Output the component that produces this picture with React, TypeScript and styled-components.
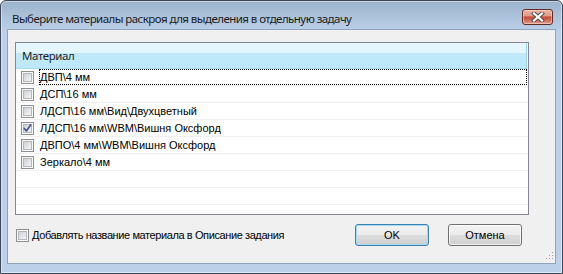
import React from "react";
import styled, { createGlobalStyle } from "styled-components";

const Global = createGlobalStyle`
  html, body { margin: 0; padding: 0; background: #ffffff; }
  * { box-sizing: border-box; }
`;

const Window = styled.div`
  position: relative;
  width: 563px;
  height: 274px;
  border: 1px solid #3b4757;
  border-radius: 6px 6px 0 0;
  background: linear-gradient(180deg, #9cb3cd 0px, #afc5dd 18px, #bcd1e9 30px, #bcd1e9 100%);
  box-shadow: inset 0 0 0 1px rgba(255, 255, 255, 0.45);
  display: flex;
  flex-direction: column;
  overflow: hidden;
`;

const TitleBar = styled.div`
  height: 28px;
  flex: none;
  display: flex;
  align-items: center;
  justify-content: space-between;
  padding: 6px 9px 0 11px;
`;

const Title = styled.span`
  font-family: "Noto Sans", "Open Sans", sans-serif;
  font-size: 11.5px;
  letter-spacing: -0.55px;
  color: #1b1b1b;
  white-space: nowrap;
`;

const CloseButton = styled.div`
  width: 31px;
  height: 16px;
  margin-top: -2px;
  border: 1px solid #5e2b25;
  border-radius: 3px;
  background: linear-gradient(
    180deg,
    #eab2a3 0%,
    #e29c8a 40%,
    #c75039 50%,
    #c95c45 65%,
    #e3a28f 100%
  );
  box-shadow: inset 0 0 0 1px rgba(255, 230, 220, 0.45);
  display: flex;
  align-items: center;
  justify-content: center;
`;

const Client = styled.div`
  position: relative;
  flex: 1;
  margin: 0 6px 9px 6px;
  border: 1px solid #8ea3bc;
  background: #f0f0f0;
  padding: 12px 0 0 7px;
  display: flex;
  flex-direction: column;
`;

const ListBox = styled.div`
  width: 514px;
  height: 173px;
  border: 1px solid #828790;
  background: #ffffff;
  overflow: hidden;
`;

const Header = styled.div`
  width: 511px;
  height: 26px;
  padding: 4px 0 0 6px;
  border-right: 1px solid #9ad6f3;
  border-bottom: 1px solid #a6dbf3;
  background: linear-gradient(180deg, #e5f7fd 0%, #e2f6fd 40%, #c0eafb 42%, #bde8fb 100%);
  font-family: "Noto Sans", "Open Sans", sans-serif;
  font-size: 11.5px;
  letter-spacing: -0.4px;
  color: #1e1e1e;
  line-height: 18px;
`;

const Row = styled.div`
  height: 17px;
  border-bottom: 1px solid #f0f0f0;
  display: flex;
  align-items: center;
  padding-left: 5px;
  gap: 5px;
`;

const ItemLabel = styled.div<{ $focused?: boolean }>`
  flex: 1;
  height: 16px;
  margin-right: 1px;
  padding-left: 1px;
  outline: ${(p) => (p.$focused ? "1px dotted #000" : "none")};
  outline-offset: -1px;
  font-family: "Liberation Sans", Arial, sans-serif;
  font-size: 11px;
  line-height: 16px;
  color: #000;
  white-space: nowrap;
`;

const BottomRow = styled.div`
  margin-top: 9px;
  height: 22px;
  display: flex;
  align-items: center;
  padding-left: 1px;
  padding-right: 33px;
`;

const OptionLabel = styled.label`
  flex: 1;
  display: flex;
  align-items: center;
  gap: 3px;
  font-family: "Liberation Sans", Arial, sans-serif;
  font-size: 11px;
  letter-spacing: -0.4px;
  color: #000;
`;

const Button = styled.div<{ $default?: boolean }>`
  width: 74px;
  height: 22px;
  margin-left: ${(p) => (p.$default ? "0" : "19px")};
  border: 1px solid ${(p) => (p.$default ? "#3c7fb1" : "#707070")};
  border-radius: 3px;
  background: linear-gradient(180deg, #f2f2f2 0%, #ebebeb 50%, #dddddd 51%, #cfcfcf 100%);
  box-shadow: inset 0 0 0 1px ${(p) => (p.$default ? "#9fdcf6" : "rgba(255,255,255,0.7)")};
  display: flex;
  align-items: center;
  justify-content: center;
  font-family: "Liberation Sans", Arial, sans-serif;
  font-size: 11px;
  color: #000;
`;

const Grip = styled.svg`
  position: absolute;
  right: 1px;
  bottom: 1px;
`;

const CheckBox: React.FC<{ checked?: boolean }> = ({ checked }) => (
  <svg width="13" height="13" viewBox="0 0 13 13" style={{ flex: "none" }}>
    <defs>
      <linearGradient id="cbOuter" x1="0" y1="0" x2="1" y2="1">
        <stop offset="0" stopColor="#f4f4f4" />
        <stop offset="1" stopColor="#ffffff" />
      </linearGradient>
      <linearGradient id="cbInner" x1="0" y1="0" x2="1" y2="1">
        <stop offset="0" stopColor="#cbcfd5" />
        <stop offset="1" stopColor="#f7f7f7" />
      </linearGradient>
    </defs>
    <rect x="0.5" y="0.5" width="12" height="12" fill="url(#cbOuter)" stroke="#8e8f8f" />
    <rect x="2.5" y="2.5" width="8" height="8" fill="url(#cbInner)" stroke="#b4b8bd" />
    {checked && (
      <path
        d="M3.3 6.4 L5.4 9 L9.8 2.8"
        fill="none"
        stroke="#3d5196"
        strokeWidth="1.6"
        strokeLinecap="round"
        strokeLinejoin="round"
      />
    )}
  </svg>
);

const CloseIcon = () => (
  <svg width="14" height="10" viewBox="0 0 14 10">
    <path d="M3 1.5 L11 8.5 M11 1.5 L3 8.5" stroke="#4a4a4a" strokeWidth="4" strokeLinecap="square" />
    <path d="M3 1.5 L11 8.5 M11 1.5 L3 8.5" stroke="#ffffff" strokeWidth="2.2" strokeLinecap="square" />
  </svg>
);

const items = [
  { name: "ДВП\\4 мм", checked: false },
  { name: "ДСП\\16 мм", checked: false },
  { name: "ЛДСП\\16 мм\\Вид\\Двухцветный", checked: false },
  { name: "ЛДСП\\16 мм\\WBM\\Вишня Оксфорд", checked: true },
  { name: "ДВПО\\4 мм\\WBM\\Вишня Оксфорд", checked: false },
  { name: "Зеркало\\4 мм", checked: false },
];

const EmptyRow = styled(Row)``;

export default function App() {
  return (
    <>
      <Global />
      <Window>
        <TitleBar>
          <Title>Выберите материалы раскроя для выделения в отдельную задачу</Title>
          <CloseButton>
            <CloseIcon />
          </CloseButton>
        </TitleBar>
        <Client>
          <ListBox>
            <Header>Материал</Header>
            {items.map((it, i) => (
              <Row key={i}>
                <CheckBox checked={it.checked} />
                <ItemLabel $focused={i === 0}>{it.name}</ItemLabel>
              </Row>
            ))}
            {[0, 1, 2].map((i) => (
              <EmptyRow key={"e" + i} />
            ))}
          </ListBox>
          <BottomRow>
            <OptionLabel>
              <CheckBox />
              Добавлять название материала в Описание задания
            </OptionLabel>
            <Button $default>OK</Button>
            <Button>Отмена</Button>
          </BottomRow>
          <Grip width="10" height="10" viewBox="0 0 10 10">
            {[
              [8, 0],
              [8, 3],
              [5, 3],
              [8, 6],
              [5, 6],
              [2, 6],
            ].map(([x, y], i) => (
              <rect key={i} x={x} y={y} width="1" height="1" fill="#a0a0a0" />
            ))}
          </Grip>
        </Client>
      </Window>
    </>
  );
}
